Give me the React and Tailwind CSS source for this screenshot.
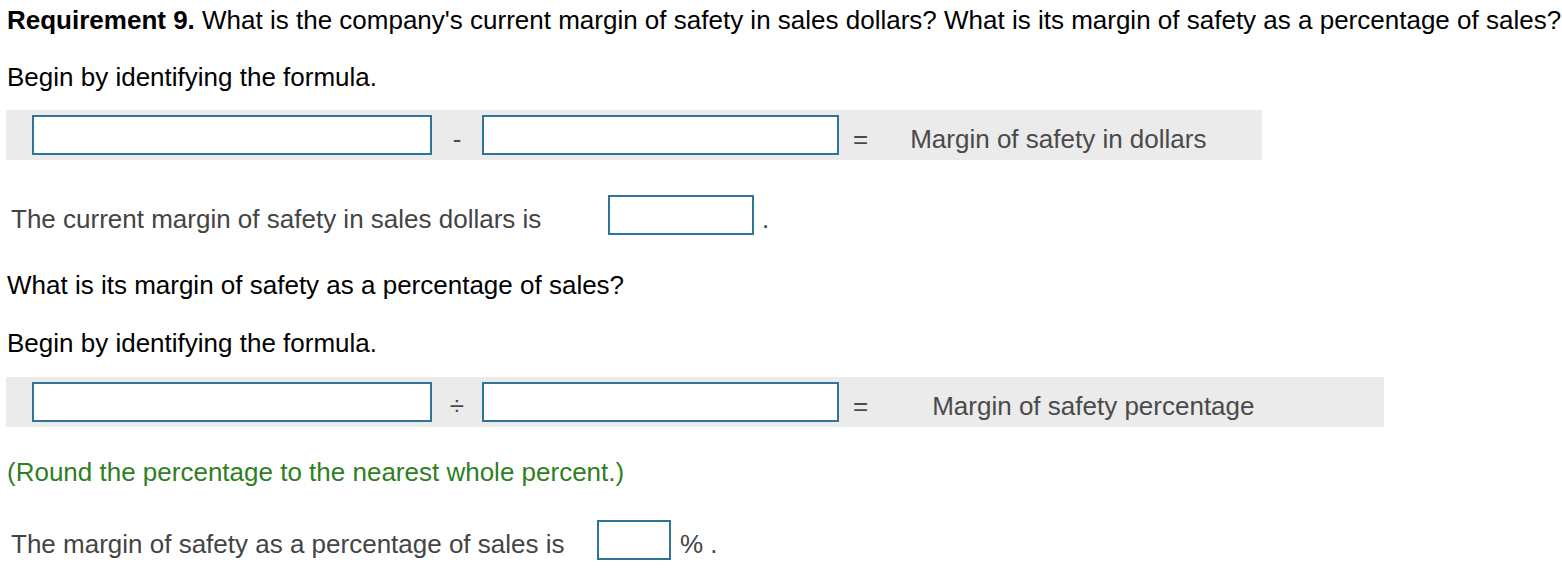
function Box({ w, h = "h-[40px]" }) {
  return <div className={`${w} ${h} shrink-0 border-2 border-[#2f7596] bg-white`} />;
}

function Formula({ op, label, width, labelGap }) {
  return (
    <div className={`ml-[6px] flex h-[50px] items-center bg-[#ebebeb] ${width}`}>
      <div className="ml-[26px]">
        <Box w="w-[400px]" />
      </div>
      <span className="w-[50px] pt-2 text-center text-[26px] text-[#4a4a4a]">{op}</span>
      <Box w="w-[357px]" />
      <span className="ml-[14px] pt-2 text-[26px] text-[#4a4a4a]">=</span>
      <span className={`${labelGap} pt-2 text-[26px] text-[#4a4a4a]`}>{label}</span>
    </div>
  );
}

export default function App() {
  return (
    <div className="min-h-[570px] bg-white pt-[5px] font-['Liberation_Sans',Arial,sans-serif] text-[26px] leading-[30px] text-black">
      <p className="pl-[7px] whitespace-nowrap">
        <b>Requirement 9.</b> What is the company's current margin of safety in sales dollars? What is its margin of
        safety as a percentage of sales?
      </p>

      <p className="mt-[27px] pl-[7px]">Begin by identifying the formula.</p>

      <div className="mt-[18px]">
        <Formula op="-" label="Margin of safety in dollars" width="w-[1256px]" labelGap="ml-[42px]" />
      </div>

      <div className="mt-[35px] flex h-[40px] items-center">
        <span className="w-[608px] shrink-0 pl-[11px] pt-2 text-[#444]">The current margin of safety in sales dollars is</span>
        <Box w="w-[146px]" />
        <span className="ml-[8px] pt-2 text-[#444]">.</span>
      </div>

      <p className="mt-[35px] pl-[7px]">What is its margin of safety as a percentage of sales?</p>

      <p className="mt-[28px] pl-[7px]">Begin by identifying the formula.</p>

      <div className="mt-[19px]">
        <Formula op="÷" label="Margin of safety percentage" width="w-[1378px]" labelGap="ml-[64px]" />
      </div>

      <p className="mt-[30px] pl-[7px] text-[#2f7f1f]">(Round the percentage to the nearest whole percent.)</p>

      <div className="mt-[33px] flex h-[40px] items-center">
        <span className="w-[597px] shrink-0 pl-[11px] pt-2 text-[#444]">The margin of safety as a percentage of sales is</span>
        <Box w="w-[74px]" />
        <span className="ml-[9px] pt-2 text-[#444]">% .</span>
      </div>
    </div>
  );
}
